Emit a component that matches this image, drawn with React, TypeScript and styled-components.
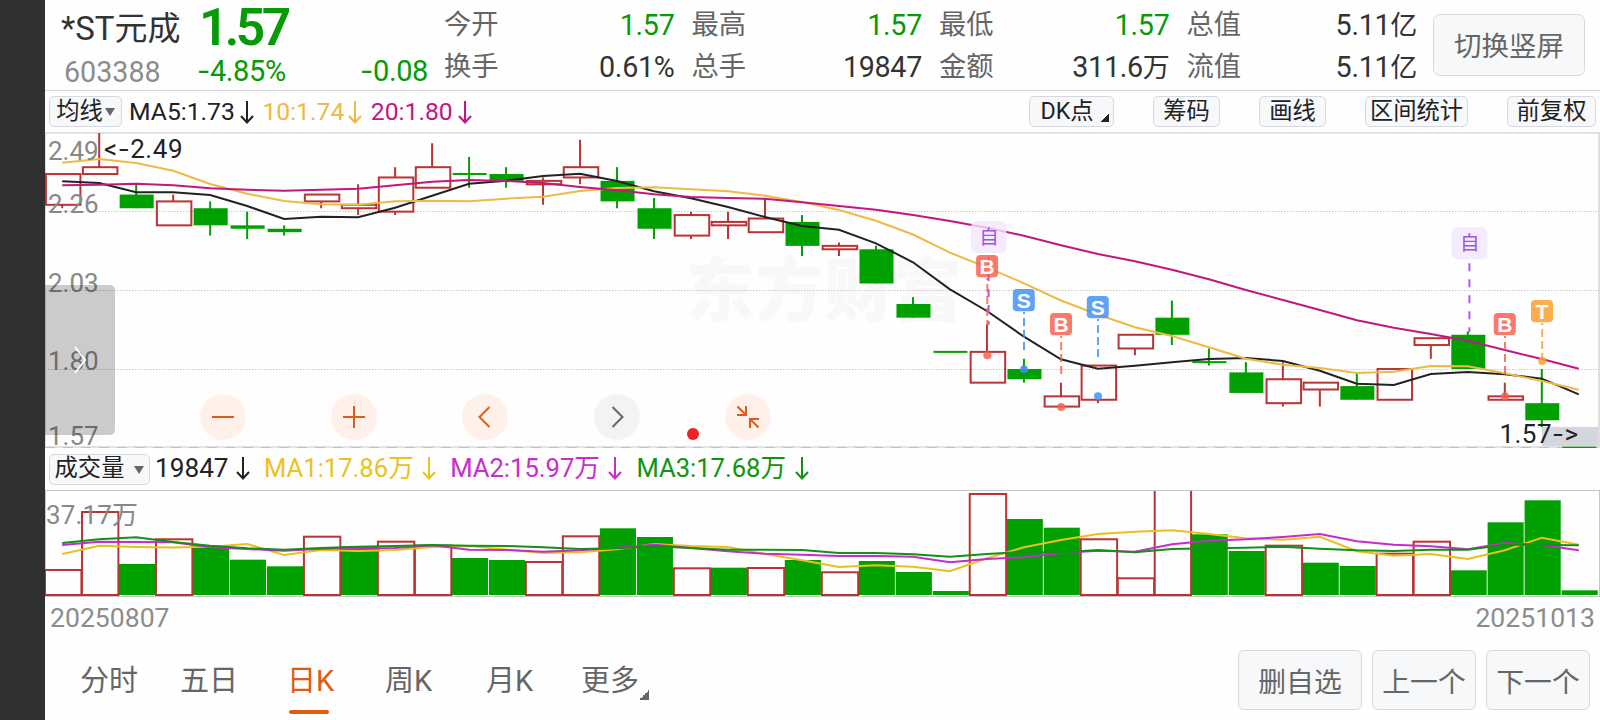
import React from "react";
import styled, { createGlobalStyle, css } from "styled-components";

const GlobalStyle = createGlobalStyle`
  * {
    box-sizing: border-box;
  }

  body {
    margin: 0;
    background: #fff;
    font-family: Roboto, "Noto Sans CJK SC", sans-serif;
  }
`;

const RED = "#b93434";
const GREEN = "#00a000";

const Screen = styled.div`
  display: flex;
  width: 1600px;
  height: 720px;
  overflow: hidden;
  background: #fefefe;
`;

const SideStrip = styled.div`
  flex: 0 0 45px;
  background: #303030;
`;

const Main = styled.main`
  display: flex;
  flex-direction: column;
  flex: 1;
  min-width: 0;
  white-space: nowrap;
`;

const boxed = css`
  display: flex;
  align-items: center;
  justify-content: center;
  border: 1px solid #d6d9df;
  border-radius: 5px;
  background: #f7f8fa;
`;

/* header */

const Header = styled.header`
  display: flex;
  height: 91px;
  border-bottom: 1px solid #d4d4d6;
`;

const StockId = styled.div`
  display: flex;
  flex-direction: column;
  width: 151px;
  padding-left: 16px;
`;

const StockName = styled.div`
  height: 54px;
  line-height: 57px;
  font-size: 33px;
  color: #333;
`;

const StockCode = styled.div`
  padding-left: 3px;
  line-height: 37px;
  font-size: 28.7px;
  color: #8c8c8c;
`;

const PriceBlock = styled.div`
  display: flex;
  flex-direction: column;
  width: 249px;
  padding-right: 17px;
  color: #069a06;
`;

const Price = styled.div`
  height: 55px;
  padding-left: 3px;
  line-height: 55px;
  font-size: 51.5px;
  font-weight: 600;
  letter-spacing: -3.6px;
`;

const PriceChange = styled.div`
  display: flex;
  justify-content: space-between;
  padding-left: 1px;
  line-height: 32px;
  font-size: 29px;
  letter-spacing: -0.4px;
`;

const Dash = styled.span`
  font-family: Inter, sans-serif;
`;

const Stats = styled.div`
  display: grid;
  grid-template-columns: repeat(4, 228.5px);
  grid-template-rows: 42px 42px;
  column-gap: 19px;
  padding-top: 4px;
`;

const Stat = styled.div<{ $down?: boolean }>`
  display: flex;
  align-items: center;
  justify-content: space-between;
  margin-left: -1px;
  line-height: 38px;
  font-size: 27.3px;
  color: #666;

  > b {
    margin-right: -1px;
    font-size: 28.7px;
    font-weight: 400;
    letter-spacing: -0.3px;
    color: ${(p) => (p.$down ? "#069a06" : "#333")};
  }

  > b small {
    font-size: 27px;
  }
`;

const RotateButton = styled.button`
  ${boxed}
  width: 152px;
  height: 62px;
  margin: 14px 0 0 17px;
  padding: 0 0 2px;
  border-radius: 7px;
  font-family: inherit;
  font-size: 27.5px;
  color: #666;
`;

/* indicator bars */

const Bar = styled.div<{ $height: number }>`
  display: flex;
  align-items: center;
  flex: 0 0 ${(p) => p.$height}px;
  padding: 0 4px;
`;

const Chip = styled.div<{ $width: number; $gap?: number }>`
  ${boxed}
  width: ${(p) => p.$width}px;
  height: 31px;
  margin-left: ${(p) => p.$gap ?? 0}px;
  padding-bottom: 2px;
  line-height: 28px;
  font-size: 23.3px;
  color: #222;
`;

const Caret = styled.i<{ $gap: number }>`
  margin: 3px 0 0 ${(p) => p.$gap}px;
  border: solid transparent;
  border-width: 8px 5px 0;
  border-top-color: #666;
`;

const Corner = styled.i<{ $size: number; $color: string }>`
  align-self: flex-end;
  width: ${(p) => p.$size}px;
  height: ${(p) => p.$size}px;
  background: linear-gradient(135deg, transparent 50%, ${(p) => p.$color} 50%);
`;

const ChipCorner = styled(Corner)`
  margin: 0 -6px 2px 7px;
`;

const LegendItem = styled.div<{ $width: number; $size: number; $color: string }>`
  display: flex;
  align-items: center;
  justify-content: space-between;
  width: ${(p) => p.$width}px;
  line-height: 30px;
  font-size: ${(p) => p.$size}px;
  color: ${(p) => p.$color};
`;

const Legend = styled.div<{ $left: number; $gap: number; $lift?: number }>`
  display: flex;
  gap: ${(p) => p.$gap}px;
  margin-left: ${(p) => p.$left}px;
  padding-bottom: ${(p) => p.$lift ?? 0}px;
`;

const Tools = styled.div`
  display: flex;
  margin-left: auto;
`;

/* charts */

const ChartArea = styled.div<{ $height: number }>`
  position: relative;
  flex: 0 0 ${(p) => p.$height}px;

  > svg {
    display: block;
  }
`;

const DrawerHandle = styled.div`
  position: absolute;
  left: 0;
  top: 153px;
  display: flex;
  align-items: center;
  justify-content: center;
  width: 70px;
  height: 150px;
  border-radius: 0 5px 5px 0;
  background: rgba(0, 0, 0, 0.2);
`;

const Controls = styled.div`
  position: absolute;
  left: 155px;
  top: 261.5px;
  display: flex;
  gap: 85.2px;
`;

const RoundButton = styled.div<{ $muted?: boolean }>`
  display: flex;
  align-items: center;
  justify-content: center;
  width: 46px;
  height: 46px;
  border-radius: 50%;
  background: ${(p) => (p.$muted ? "#f3f3f3" : "#fff1e9")};
  color: ${(p) => (p.$muted ? "#666" : "#dc5c18")};
`;

const RedDot = styled.div`
  position: absolute;
  left: 641.5px;
  top: 296px;
  width: 12px;
  height: 12px;
  border-radius: 50%;
  background: #ee2224;
`;

const Dates = styled.div`
  display: flex;
  justify-content: space-between;
  flex: 0 0 47px;
  padding: 5px 5px 0;
  line-height: 32px;
  font-size: 26.6px;
  color: #8c8c8c;
`;

/* footer */

const Footer = styled.footer`
  display: flex;
  flex: 1;
  padding: 6px 10px 0 35px;
`;

const Tab = styled.div<{ $width: number; $active?: boolean }>`
  display: flex;
  flex-direction: column;
  width: ${(p) => p.$width}px;
  line-height: 63px;
  font-size: 29px;
  color: ${(p) => (p.$active ? "#e05a10" : "#666")};

  &::after {
    content: "";
    display: ${(p) => (p.$active ? "block" : "none")};
    width: 40px;
    height: 4px;
    margin-top: -3px;
    margin-left: 2px;
    border-radius: 2px;
    background: #e05a10;
  }
`;

const MoreTab = styled.div`
  display: flex;
  height: 50px;
  line-height: 63px;
  font-size: 29px;
  color: #666;
`;

const FooterButtons = styled.div`
  display: flex;
  gap: 10px;
  margin-left: auto;
`;

const FooterButton = styled.button<{ $width: number }>`
  ${boxed}
  width: ${(p) => p.$width}px;
  height: 60px;
  padding: 0;
  border-radius: 6px;
  font-family: inherit;
  font-size: 27.8px;
  color: #666;
`;

const Digits = styled.text`
  font-size: 26px;
`;

// [open, close, high, low]
const CANDLES = [
  [2.28, 2.37, 2.37, 2.27],
  [2.37, 2.39, 2.49, 2.37],
  [2.31, 2.27, 2.34, 2.27],
  [2.22, 2.29, 2.31, 2.22],
  [2.27, 2.22, 2.29, 2.19],
  [2.22, 2.21, 2.26, 2.18],
  [2.21, 2.2, 2.22, 2.19],
  [2.29, 2.31, 2.31, 2.27],
  [2.27, 2.28, 2.34, 2.25],
  [2.26, 2.36, 2.39, 2.25],
  [2.33, 2.39, 2.46, 2.33],
  [2.37, 2.37, 2.42, 2.33],
  [2.37, 2.35, 2.39, 2.33],
  [2.34, 2.35, 2.36, 2.28],
  [2.36, 2.39, 2.47, 2.34],
  [2.35, 2.29, 2.39, 2.27],
  [2.27, 2.21, 2.3, 2.18],
  [2.19, 2.25, 2.26, 2.18],
  [2.22, 2.23, 2.26, 2.18],
  [2.2, 2.24, 2.3, 2.2],
  [2.23, 2.16, 2.25, 2.13],
  [2.15, 2.16, 2.17, 2.13],
  [2.15, 2.05, 2.16, 2.05],
  [1.99, 1.95, 2.01, 1.95],
  [1.85, 1.85, 1.85, 1.85],
  [1.76, 1.85, 1.93, 1.76],
  [1.8, 1.77, 1.83, 1.76],
  [1.69, 1.72, 1.76, 1.69],
  [1.71, 1.81, 1.81, 1.7],
  [1.86, 1.9, 1.9, 1.84],
  [1.95, 1.9, 2.0, 1.87],
  [1.82, 1.82, 1.86, 1.81],
  [1.79, 1.73, 1.82, 1.73],
  [1.7, 1.77, 1.82, 1.69],
  [1.74, 1.76, 1.76, 1.69],
  [1.75, 1.71, 1.79, 1.71],
  [1.71, 1.8, 1.8, 1.71],
  [1.87, 1.89, 1.89, 1.83],
  [1.9, 1.8, 1.91, 1.8],
  [1.71, 1.72, 1.76, 1.71],
  [1.7, 1.65, 1.8, 1.63],
  [1.57, 1.57, 1.57, 1.57],
];

const MA5 = [181.3, 183, 192.3, 192.3, 195, 206, 219, 216.7, 217.3, 207.7, 195.7, 183.7, 180.7, 176, 173.7, 181, 191.3, 198.3, 207, 217, 226, 229.7, 243.3, 262.3, 289.3, 311, 336.7, 359.3, 368.7, 365.7, 362.3, 359, 358, 361, 370.7, 383.7, 385, 374, 372, 374.3, 378.7, 394.3];
const MA10 = [162.7, 159, 163, 170.7, 184, 193.7, 201, 204.3, 204.7, 201.3, 200.7, 201.3, 198.7, 196.7, 191, 188, 187.3, 189.3, 191.3, 195.7, 202, 210, 220.7, 234.5, 252.7, 267.3, 283.3, 300.5, 314.5, 327.3, 336, 347.3, 358.7, 364.7, 368, 373, 371.7, 366, 366.3, 373.3, 381, 389.7];
const MA20 = [185.3, 184.7, 183.7, 185.3, 188.3, 189.7, 190.7, 189.7, 188.7, 185.3, 181.7, 180, 181, 183, 187, 190.3, 194.3, 197, 198, 198.7, 202.3, 206, 209.7, 215, 221, 227.7, 235.7, 245.3, 254, 261.3, 269.7, 279.3, 290, 300, 310, 320.3, 327.7, 334, 340.7, 350, 359, 368.7];

// top edge of each volume bar
const VOLUMES = [570, 512, 564, 539.3, 547.7, 559.7, 566.3, 536.7, 546.3, 541.7, 545.7, 558, 560, 562, 536.3, 528.3, 537, 568.3, 567.7, 568, 560, 572.3, 561, 572, 591, 494, 519, 527.7, 539.3, 578.3, 470, 534.3, 551, 545.7, 562.7, 566, 553.7, 541.7, 570.3, 522.3, 500.3, 590.3];
const VOL_MA1 = [554, 545.7, 547, 547.5, 546.7, 544, 555, 550, 551, 550, 547, 546, 549.5, 553, 552.3, 549.3, 544, 546, 547, 554, 560.3, 567, 565.3, 566.7, 571.3, 558.3, 547.3, 540, 534, 531.7, 530.3, 534, 538.3, 539.7, 536.7, 551.3, 555.7, 554, 559, 550.3, 537.7, 544.7];
const VOL_MA2 = [545, 541.7, 542, 542.3, 547.3, 549, 550.7, 548.7, 548.3, 548, 545.3, 549.7, 550, 551.7, 550.3, 547.7, 544.7, 548, 551.3, 553.7, 554.7, 556, 556, 556.7, 562.3, 559, 557.3, 553, 550.7, 551.7, 544.3, 540.7, 539.3, 537, 534, 541.3, 544.7, 546.3, 549.3, 543, 545, 550.3];
const VOL_MA3 = [543, 539.3, 537.3, 542, 545.7, 548.3, 549.7, 548, 546.7, 546, 545, 545.7, 546, 547.3, 549, 548.3, 546.3, 548, 549.7, 549.7, 550, 553, 553, 554.3, 556.7, 554, 552, 552.5, 550, 552.3, 549, 548.3, 547.7, 546.7, 548.7, 550.3, 551, 549.7, 549.7, 544.7, 545, 545.3];

const MARKERS = [
  { x: 987.3, top: 255, letter: "B", end: 325, dot: 355.3 },
  { x: 1024, top: 289, letter: "S", end: 350, dot: 369.3 },
  { x: 1061.2, top: 313, letter: "B", end: 374, dot: 407 },
  { x: 1098, top: 296, letter: "S", end: 357, dot: 396.3 },
  { x: 1505, top: 313, letter: "B", end: 374, dot: 396.3 },
  { x: 1542.2, top: 300, letter: "T", end: 357, dot: 361 },
];

const MARKER_COLORS: Record<string, string> = {
  B: "#f9604d",
  S: "#4390f4",
  T: "#fc9f2c",
};

const SELF_MARKERS = [
  { x: 988.6, top: 221, end: 325 },
  { x: 1469.4, top: 227.3, end: 332 },
];

const AXIS = [
  { label: "2.49", y: 159.7 },
  { label: "2.26", y: 212.7 },
  { label: "2.03", y: 292 },
  { label: "1.80", y: 369.7 },
  { label: "1.57", y: 444.7 },
];

const cx = (i: number) => 62.2 + i * 36.99;
const py = (price: number) => 133 + (2.49 - price) * 342;
const points = (ys: number[]) => ys.map((y, i) => `${cx(i)},${y}`).join(" ");

const isUp = (i: number) => CANDLES[i][1] > CANDLES[i][0];
// volume bars are coloured against the previous close
const isVolumeUp = (i: number) => i === 0 || CANDLES[i][1] >= CANDLES[i - 1][1];

interface LineProps {
  values: number[];
  color: string;
}

const Line = ({ values, color }: LineProps) => (
  <polyline points={points(values)} fill="none" stroke={color} strokeWidth={2} />
);

const Candle = ({ index }: { index: number }) => {
  const [open, close, high, low] = CANDLES[index];
  const x = cx(index);
  const top = py(Math.max(open, close));
  const bottom = py(Math.min(open, close));

  if (isUp(index)) {
    return (
      <g stroke={RED} strokeWidth={2} fill="none">
        <path d={`M${x} ${py(high)}V${top}M${x} ${bottom}V${py(low)}`} />
        <rect x={x - 16.3} y={top} width={34.5} height={bottom - top} />
      </g>
    );
  }
  return (
    <g fill={GREEN}>
      <rect x={x - 1} y={py(high)} width={2} height={py(low) - py(high)} />
      <rect x={x - 16.5} y={bottom - top < 1 ? top - 1 : top} width={34} height={Math.max(bottom - top, 2)} />
    </g>
  );
};

const Marker = ({ x, top, letter, end, dot }: (typeof MARKERS)[number]) => {
  const color = MARKER_COLORS[letter];
  return (
    <g opacity={0.83}>
      <path d={`M${x} ${top + 23}V${end}`} stroke={color} strokeWidth={2} strokeDasharray="8 4" strokeDashoffset={6} />
      <circle cx={x} cy={dot} r={4} fill={color} />
      <rect x={x - 11.2} y={top} width={22} height={22.3} rx={4} fill={color} />
      <text x={x - 0.2} y={top + 18.8} fontSize={21} fontWeight={700} fontFamily="Liberation Sans" textAnchor="middle" fill="#fff">
        {letter}
      </text>
    </g>
  );
};

const PriceChart = () => (
  <svg width={1555} height={316} viewBox="45 132 1555 316">
    <text x={686} y={316} fontSize={69} fontWeight={900} fill="#f8f8f8" fontFamily="Noto Sans CJK SC">
      东方财富
    </text>
    {[211.5, 290.5, 369.5].map((y) => (
      <path key={y} d={`M45 ${y}H1598`} stroke="#cacaca" strokeDasharray="1.5 1.5" />
    ))}
    <rect x={1542} y={427} width={57} height={20} fill="#d3d6dc" />
    <path d="M45 133H1600M45 447H1600" stroke="#e2e2e2" strokeWidth={2} />
    <path d="M45.5 133V447" stroke="#dedede" />
    <path d="M1599 133V447" stroke="#dedede" strokeWidth={2} />
    <path d="M45 447.5H1598" stroke="#d9bd9c" strokeDasharray="10 8" />
    {CANDLES.map((_, i) => (
      <Candle key={i} index={i} />
    ))}
    <Line values={MA5} color="#222" />
    <Line values={MA10} color="#efb945" />
    <Line values={MA20} color="#c0187f" />
    {SELF_MARKERS.map(({ x, top, end }) => (
      <g key={x}>
        <path d={`M${x} ${top + 36}V${end}`} stroke="#a95ee6" strokeWidth={2} strokeDasharray="8 8" />
        <rect x={x - 17.7} y={top} width={35.5} height={32} rx={6} fill="#f3e6fe" fillOpacity={0.8} />
        <text x={x + 0.3} y={top + 23} fontSize={19.5} textAnchor="middle" fill="#a055dc">
          自
        </text>
      </g>
    ))}
    {MARKERS.map((m) => (
      <Marker key={m.x} {...m} />
    ))}
    {AXIS.map(({ label, y }) => (
      <Digits key={label} x={48} y={y} fill="#888">
        {label}
      </Digits>
    ))}
    <Digits x={104} y={157.5} fill="#222" textLength={78.5}>
      &lt;<tspan fontFamily="Inter">-</tspan>2.49
    </Digits>
    <Digits x={1499.5} y={443} fill="#222" textLength={78.5}>
      1.57<tspan fontFamily="Inter">-</tspan>&gt;
    </Digits>
  </svg>
);

const VolumeChart = () => (
  <svg width={1555} height={107} viewBox="45 490 1555 107">
    <path d="M45 490.5H1600M45 596.5H1600M45.5 490V597M1599.5 490V597" stroke="#c6c6c6" />
    {VOLUMES.map((top, i) =>
      isVolumeUp(i) ? null : (
        <rect key={i} x={cx(i) - 17.2} y={top} width={36.1} height={595 - top} fill={GREEN} />
      )
    )}
    <svg x={45} y={491} width={1555} height={106} viewBox="45 491 1555 106">
      {VOLUMES.map((top, i) =>
        isVolumeUp(i) ? (
          <rect key={i} x={cx(i) - 17.2} y={top} width={36.4} height={595 - top} fill="none" stroke={RED} strokeWidth={2} />
        ) : null
      )}
    </svg>
    <Line values={VOL_MA1} color="#ebbf1d" />
    <Line values={VOL_MA2} color="#c32dc9" />
    <Line values={VOL_MA3} color="#159015" />
    <Digits x={46} y={524} fill="#888" textLength={92}>
      37.17万
    </Digits>
  </svg>
);

const ArrowDown = () => (
  <svg width={14} height={30} viewBox="0 0 14 30" fill="none" stroke="currentColor" strokeWidth={2}>
    <path d="M7 4V25.5M1 19L7 25.5L13 19" />
  </svg>
);

const Icon = ({ d }: { d: string }) => (
  <svg width={24} height={24} viewBox="0 0 24 24" fill="none" stroke="currentColor" strokeWidth={2}>
    <path d={d} />
  </svg>
);

const App = () => {
  return (
    <Screen>
      <GlobalStyle />
      <SideStrip />
      <Main>
        <Header>
          <StockId>
            <StockName>*ST元成</StockName>
            <StockCode>603388</StockCode>
          </StockId>
          <PriceBlock>
            <Price>1.57</Price>
            <PriceChange>
              <span><Dash>-</Dash>4.85%</span>
              <span><Dash>-</Dash>0.08</span>
            </PriceChange>
          </PriceBlock>
          <Stats>
            <Stat $down>今开<b>1.57</b></Stat>
            <Stat $down>最高<b>1.57</b></Stat>
            <Stat $down>最低<b>1.57</b></Stat>
            <Stat>总值<b>5.11<small>亿</small></b></Stat>
            <Stat>换手<b>0.61%</b></Stat>
            <Stat>总手<b>19847</b></Stat>
            <Stat>金额<b>311.6<small>万</small></b></Stat>
            <Stat>流值<b>5.11<small>亿</small></b></Stat>
          </Stats>
          <RotateButton>切换竖屏</RotateButton>
        </Header>

        <Bar $height={41}>
          <Chip $width={73}>均线<Caret $gap={2} /></Chip>
          <Legend $left={7} $gap={8.4}>
            <LegendItem $width={125} $size={24.7} $color="#222">MA5:1.73<ArrowDown /></LegendItem>
            <LegendItem $width={100} $size={24.7} $color="#efb945">10:1.74<ArrowDown /></LegendItem>
            <LegendItem $width={101.5} $size={24.7} $color="#c3157f">20:1.80<ArrowDown /></LegendItem>
          </Legend>
          <Tools>
            <Chip $width={85}>DK点<ChipCorner $size={8} $color="#222" /></Chip>
            <Chip $width={67} $gap={39}>筹码</Chip>
            <Chip $width={67} $gap={39}>画线</Chip>
            <Chip $width={103} $gap={39}>区间统计</Chip>
            <Chip $width={89} $gap={39}>前复权</Chip>
          </Tools>
        </Bar>

        <ChartArea $height={316}>
          <PriceChart />
          <DrawerHandle>
            <svg width={14} height={28} viewBox="0 0 14 28" fill="none" stroke="#fff" strokeWidth={2}>
              <path d="M2 1L12 14L2 27" />
            </svg>
          </DrawerHandle>
          <Controls>
            <RoundButton><Icon d="M1 12H23" /></RoundButton>
            <RoundButton><Icon d="M1 12H23M12 1V23" /></RoundButton>
            <RoundButton><Icon d="M16.5 2L6.5 12L16.5 22" /></RoundButton>
            <RoundButton $muted><Icon d="M7.5 2L17.5 12L7.5 22" /></RoundButton>
            <RoundButton><Icon d="M1.5 1.5L10 10M10 1V10H1M22.5 22.5L14 14M14 23V14H23" /></RoundButton>
          </Controls>
          <RedDot />
        </ChartArea>

        <Bar $height={42}>
          <Chip $width={101}>成交量<Caret $gap={10} /></Chip>
          <Legend $left={5} $gap={14} $lift={3}>
            <LegendItem $width={95} $size={26.2} $color="#222">19847<ArrowDown /></LegendItem>
            <LegendItem $width={172.2} $size={25.6} $color="#ebc11f">MA1:17.86万<ArrowDown /></LegendItem>
            <LegendItem $width={172.2} $size={25.6} $color="#c82dce">MA2:15.97万<ArrowDown /></LegendItem>
            <LegendItem $width={172.2} $size={25.6} $color="#109410">MA3:17.68万<ArrowDown /></LegendItem>
          </Legend>
        </Bar>

        <ChartArea $height={107}>
          <VolumeChart />
        </ChartArea>

        <Dates>
          <span>20250807</span>
          <span>20251013</span>
        </Dates>

        <Footer>
          <Tab $width={100}>分时</Tab>
          <Tab $width={107}>五日</Tab>
          <Tab $width={98} $active>日K</Tab>
          <Tab $width={101}>周K</Tab>
          <Tab $width={95}>月K</Tab>
          <MoreTab>更多<Corner $size={10} $color="#666" /></MoreTab>
          <FooterButtons>
            <FooterButton $width={124}>删自选</FooterButton>
            <FooterButton $width={104}>上一个</FooterButton>
            <FooterButton $width={104}>下一个</FooterButton>
          </FooterButtons>
        </Footer>
      </Main>
    </Screen>
  );
};

export default App;
